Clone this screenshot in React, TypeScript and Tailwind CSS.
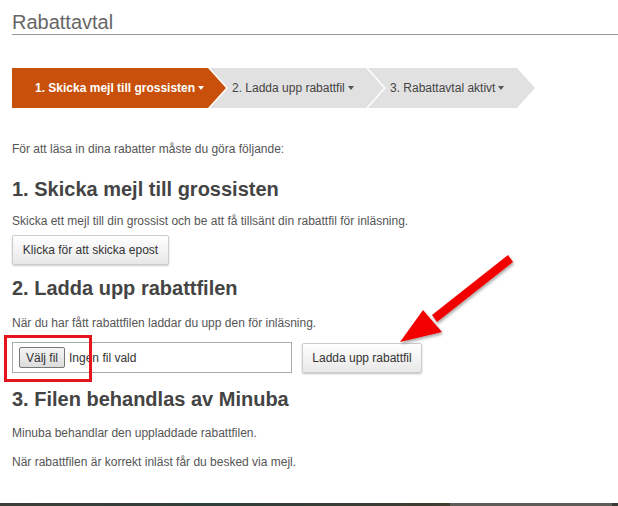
import React from "react";

const font = { fontFamily: '"Liberation Sans", Arial, sans-serif' };

function Caret({ light }: { light?: boolean }) {
  return (
    <span
      className={`ml-[3px] inline-block h-0 w-0 border-x-[3px] border-t-[4px] border-x-transparent align-middle ${
        light ? "border-t-white" : "border-t-[#555]"
      }`}
    />
  );
}

export default function App() {
  return (
    <div style={font} className="relative h-[506px] w-[618px] overflow-hidden bg-white text-[#555]">
      <div className="px-3 pt-[10px]">
        <h1 className="-mr-3 border-b border-[#999] text-[20px] leading-[24px] text-[#666]">Rabattavtal</h1>

        <div className="mt-[33px] flex h-[40px] text-[12px]">
          <div className="flex w-[214px] items-center bg-[#c9500a] pl-[23px] font-bold text-white [clip-path:polygon(0_0,196px_0,214px_20px,196px_40px,0_40px)]">
            1. Skicka mejl till grossisten
            <Caret light />
          </div>
          <div className="-ml-[16px] flex w-[174px] items-center bg-[#e1e1e1] pl-[22px] text-[#444] [clip-path:polygon(0_0,156px_0,174px_20px,156px_40px,0_40px,18px_20px)]">
            2. Ladda upp rabattfil
            <Caret />
          </div>
          <div className="-ml-[16px] flex w-[167px] items-center bg-[#e1e1e1] pl-[22px] text-[#444] [clip-path:polygon(0_0,149px_0,167px_20px,149px_40px,0_40px,18px_20px)]">
            3. Rabattavtal aktivt
            <Caret />
          </div>
        </div>

        <p className="mt-[33px] text-[12px] leading-[16px]">För att läsa in dina rabatter måste du göra följande:</p>

        <h3 className="mt-[20px] text-[20px] font-bold leading-[24px] text-[#444]">1. Skicka mejl till grossisten</h3>
        <p className="mt-[12px] text-[12px] leading-[16px]">
          Skicka ett mejl till din grossist och be att få tillsänt din rabattfil för inläsning.
        </p>
        <button className="mt-[6px] h-[30px] w-[157px] rounded-[2px] border border-[#ccc] bg-gradient-to-b from-white to-[#e8e8e8] text-[12px] text-[#333] shadow-[0_1px_2px_rgba(0,0,0,0.2)]">
          Klicka för att skicka epost
        </button>

        <h3 className="mt-[11px] text-[20px] font-bold leading-[24px] text-[#444]">2. Ladda upp rabattfilen</h3>
        <p className="mt-[15px] text-[12px] leading-[16px]">När du har fått rabattfilen laddar du upp den för inläsning.</p>

        <div className="mt-[11px] flex items-center gap-[10px]">
          <div className="flex h-[31px] w-[280px] items-center border border-[#aaa] pl-[6px] text-[12px] text-[#333]">
            <span className="flex h-[21px] items-center rounded-[2px] border border-[#777] bg-gradient-to-b from-[#f6f6f6] to-[#dcdcdc] px-[6px]">
              Välj fil
            </span>
            <span className="ml-[4px]">Ingen fil vald</span>
          </div>
          <button className="h-[30px] w-[120px] rounded-[2px] border border-[#ccc] bg-gradient-to-b from-white to-[#e8e8e8] text-[12px] text-[#333] shadow-[0_1px_2px_rgba(0,0,0,0.25)]">
            Ladda upp rabattfil
          </button>
        </div>

        <h3 className="mt-[14px] text-[20px] font-bold leading-[24px] text-[#444]">3. Filen behandlas av Minuba</h3>
        <p className="mt-[14px] text-[12px] leading-[16px]">Minuba behandlar den uppladdade rabattfilen.</p>
        <p className="mt-[13px] text-[12px] leading-[16px]">När rabattfilen är korrekt inläst får du besked via mejl.</p>
      </div>

      <div className="absolute bottom-0 left-0 flex h-[3px] w-full">
        <div className="w-[450px] bg-gradient-to-r from-[#3b3f37] via-[#2f3f39] to-[#403c30]" />
        <div className="w-[162px] bg-[#5d5c56]" />
        <div className="flex-1 bg-[#3a3a34]" />
      </div>

      {/* highlight rectangle */}
      <div className="absolute left-[4px] top-[335px] h-[47px] w-[88px] border-[3px] border-[#e8141b]" />

      {/* red arrow */}
      <svg className="absolute left-0 top-0" width="618" height="506" viewBox="0 0 618 506">
        <defs>
          <filter id="sh" x="-20%" y="-20%" width="140%" height="140%">
            <feDropShadow dx="1" dy="2" stdDeviation="1.5" floodColor="#000" floodOpacity="0.35" />
          </filter>
        </defs>
        <g filter="url(#sh)" fill="#f20000" stroke="none">
          <polygon points="513,262 508,255 432,315 437,322" />
          <polygon points="400,342 423,310 442,332" />
        </g>
      </svg>
    </div>
  );
}
